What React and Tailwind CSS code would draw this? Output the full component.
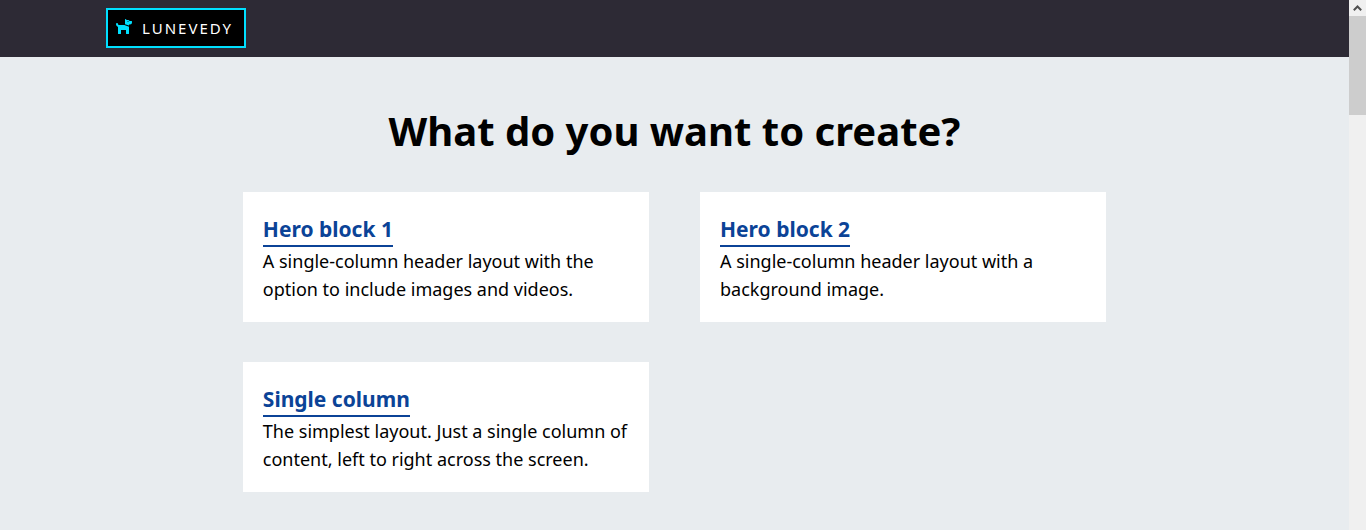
import { FaDog } from "react-icons/fa";

const layouts = [
  {
    title: "Hero block 1",
    text: "A single-column header layout with the option to include images and videos.",
  },
  {
    title: "Hero block 2",
    text: "A single-column header layout with a background image.",
  },
  {
    title: "Single column",
    text: "The simplest layout. Just a single column of content, left to right across the screen.",
  },
];

function LayoutCard({ title, text }) {
  return (
    <article className="bg-white px-5 pt-[22px] pb-[19px]">
      <h2 className="flex text-[21px] leading-[31px] font-bold">
        <a href="#" className="border-b-2 border-[#0b4397] text-[#0b4397]">
          {title}
        </a>
      </h2>
      <p className="text-lg leading-7">{text}</p>
    </article>
  );
}

function ScrollBar() {
  return (
    <div className="flex w-[17px] shrink-0 flex-col bg-[#f0f0f0]" aria-hidden="true">
      <div className="flex h-4 items-center justify-center">
        <svg width="9" height="6" viewBox="0 0 9 6" fill="none">
          <path d="M0.8 5.2 4.5 1.5 8.2 5.2" stroke="#505050" strokeWidth="2" />
        </svg>
      </div>
      <div className="h-[99px] bg-[#cdcdcd]" />
    </div>
  );
}

export default function App() {
  return (
    <div className="flex min-h-screen bg-[#e8ecef] font-['Noto_Sans',sans-serif] text-black">
      <div className="min-w-0 flex-1">
        <header className="flex bg-[#2d2a35] px-[106px] pt-2 pb-[9px]">
          <a
            href="#"
            className="flex h-10 w-[140px] items-center gap-[9px] border-2 border-[#00e0ff] bg-black px-[7px] text-white"
          >
            <FaDog className="mb-1 h-4 w-[18px] shrink-0 text-[#00e0ff]" />
            <span className="text-[15px] leading-6 tracking-[2px]">LUNEVEDY</span>
          </a>
        </header>
        <main className="mx-auto w-[64%] pt-[42px] pb-[38px]">
          <h1 className="text-center text-[40px] leading-[63px] font-bold">
            What do you want to create?
          </h1>
          <div className="mt-[30px] grid grid-cols-2 gap-x-[51px] gap-y-10">
            {layouts.map((layout) => (
              <LayoutCard key={layout.title} {...layout} />
            ))}
          </div>
        </main>
      </div>
      <ScrollBar />
    </div>
  );
}
